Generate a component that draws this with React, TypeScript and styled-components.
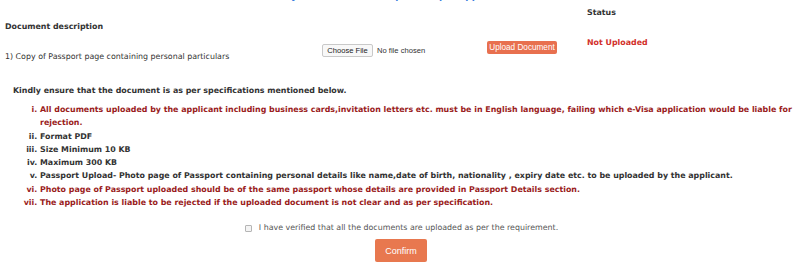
import React from "react";
import styled, { createGlobalStyle } from "styled-components";

const Global = createGlobalStyle`
  html, body { margin: 0; padding: 0; background: #fff; }
  body { font-family: "DejaVu Sans", Verdana, sans-serif; color: #333; }
  * { box-sizing: border-box; }
`;

const Page = styled.div`
  width: 799px;
  height: 264px;
  overflow: hidden;
  font-size: 7.9px;
`;

const TopClip = styled.div`
  height: 4px;
  overflow: hidden;
  display: flow-root;
`;

const TopLink = styled.div`
  margin-top: -9px;
  padding-left: 278px;
  font-size: 9px;
  line-height: 11px;
  font-weight: bold;
  color: #3b7ddd;
  white-space: nowrap;
`;

const DocTable = styled.div`
  display: grid;
  grid-template-columns: 317px 165px 100px 1fr;
  grid-template-rows: 34px auto;
  padding-left: 5px;
`;

const Cell = styled.div<{ $align?: string; $top?: number; $bottom?: number }>`
  align-self: ${(p) => p.$align || "start"};
  margin-top: ${(p) => p.$top || 0}px;
  margin-bottom: ${(p) => p.$bottom || 0}px;
  line-height: 10px;
`;

const HeadText = styled.span`
  font-weight: bold;
  color: #333;
`;

const FilePicker = styled.div`
  display: flex;
  align-items: center;
  gap: 4px;
`;

const ChooseBtn = styled.button`
  font-family: "Liberation Sans", Arial, sans-serif;
  font-size: 7.6px;
  color: #222;
  background: #f8f8f8;
  border: 1px solid #c9c9c9;
  border-radius: 2px;
  height: 13px;
  width: 51px;
  padding: 0;
`;

const NoFile = styled.span`
  font-family: "Liberation Sans", Arial, sans-serif;
  font-size: 7.6px;
  color: #333;
`;

const UploadBtn = styled.button`
  font-family: "Liberation Sans", Arial, sans-serif;
  font-size: 8.2px;
  color: #fff;
  background: #e8704f;
  border: none;
  border-radius: 2px;
  height: 13px;
  width: 70px;
  padding: 0;
`;

const StatusText = styled.span`
  font-weight: bold;
  color: #d2312c;
`;

const Notice = styled.div`
  margin-top: 24px;
  padding-left: 13px;
  font-weight: bold;
  color: #333;
  line-height: 10px;
`;

const SpecList = styled.ol`
  list-style-type: lower-roman;
  margin: 7px -12px 0 0;
  padding-left: 40px;
  padding-right: 0;
  font-weight: bold;
  line-height: 13.3px;
`;

const Spec = styled.li<{ $warn?: boolean }>`
  color: ${(p) => (p.$warn ? "#9a1c1c" : "#333")};
`;

const VerifyRow = styled.label`
  display: flex;
  justify-content: center;
  align-items: center;
  gap: 7px;
  margin-top: 14px;
  padding-left: 4px;
  color: #555;
  line-height: 10px;
`;

const Check = styled.input`
  appearance: none;
  width: 7px;
  height: 7px;
  margin: 0;
  border: 1px solid #b5b5b5;
  border-radius: 1px;
  background: #f4f4f4;
`;

const ConfirmWrap = styled.div`
  display: flex;
  justify-content: center;
  padding-left: 3px;
  margin-top: 6px;
`;

const ConfirmBtn = styled.button`
  font-family: "Liberation Sans", Arial, sans-serif;
  font-size: 9px;
  color: #fff;
  background: #e8784f;
  border: none;
  border-radius: 2px;
  width: 52px;
  height: 23px;
  padding: 0;
`;

export default function App() {
  return (
    <Page>
      <Global />
      <TopClip>
        <TopLink>Any documents to be uploaded per applicant</TopLink>
      </TopClip>
      <DocTable>
        <Cell $align="end" $bottom={6}>
          <HeadText>Document description</HeadText>
        </Cell>
        <Cell />
        <Cell />
        <Cell $top={4}>
          <HeadText>Status</HeadText>
        </Cell>
        <Cell $top={14}>1) Copy of Passport page containing personal particulars</Cell>
        <Cell $top={6}>
          <FilePicker>
            <ChooseBtn>Choose File</ChooseBtn>
            <NoFile>No file chosen</NoFile>
          </FilePicker>
        </Cell>
        <Cell $top={3}>
          <UploadBtn>Upload Document</UploadBtn>
        </Cell>
        <Cell>
          <StatusText>Not Uploaded</StatusText>
        </Cell>
      </DocTable>
      <Notice>Kindly ensure that the document is as per specifications mentioned below.</Notice>
      <SpecList>
        <Spec $warn>
          All documents uploaded by the applicant including business cards,invitation letters etc. must be in English
          language, failing which e-Visa application would be liable for rejection.
        </Spec>
        <Spec>Format PDF</Spec>
        <Spec>Size Minimum 10 KB</Spec>
        <Spec>Maximum 300 KB</Spec>
        <Spec>
          Passport Upload- Photo page of Passport containing personal details like name,date of birth, nationality ,
          expiry date etc. to be uploaded by the applicant.
        </Spec>
        <Spec $warn>
          Photo page of Passport uploaded should be of the same passport whose details are provided in Passport Details
          section.
        </Spec>
        <Spec $warn>
          The application is liable to be rejected if the uploaded document is not clear and as per specification.
        </Spec>
      </SpecList>
      <VerifyRow>
        <Check type="checkbox" />
        <span>I have verified that all the documents are uploaded as per the requirement.</span>
      </VerifyRow>
      <ConfirmWrap>
        <ConfirmBtn>Confirm</ConfirmBtn>
      </ConfirmWrap>
    </Page>
  );
}
